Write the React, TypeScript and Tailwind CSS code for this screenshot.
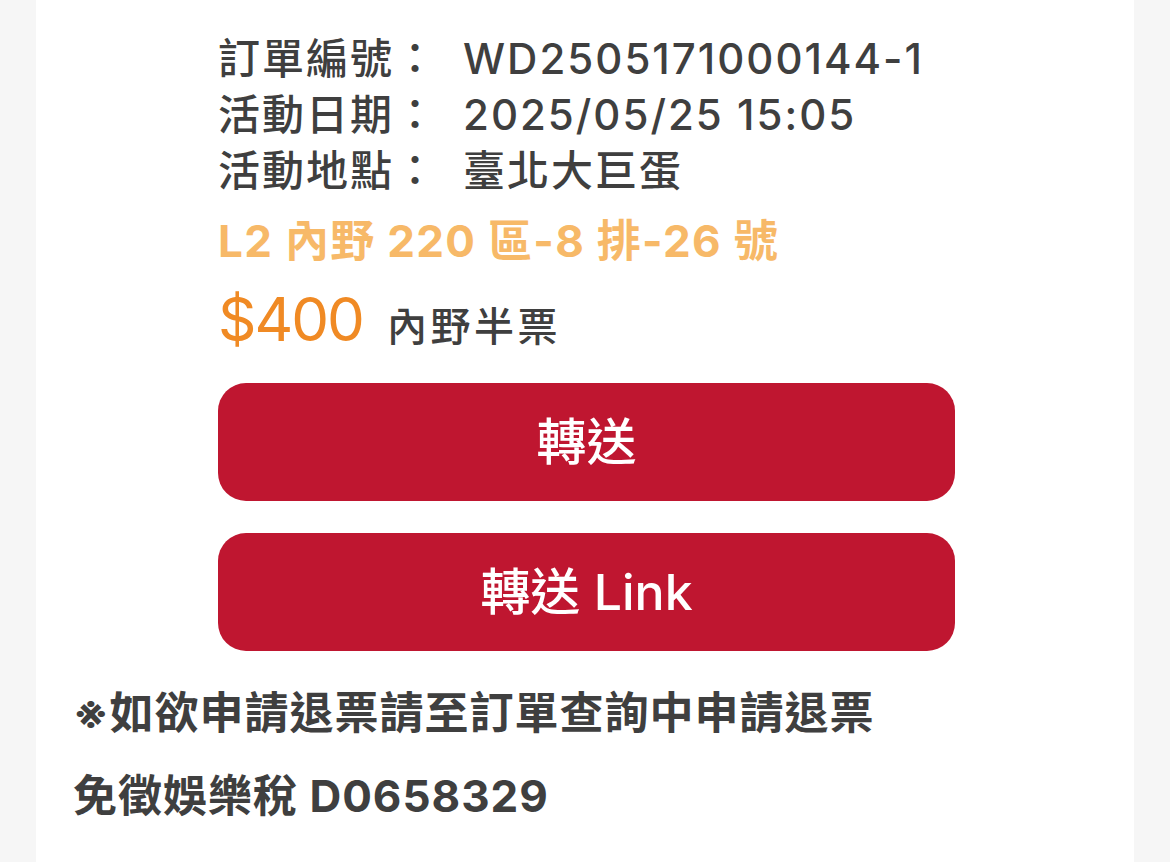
const font = "font-['Inter','Noto_Sans_CJK_TC',sans-serif]";

function InfoRow({ label, value }: { label: string; value: string }) {
  return (
    <div className="flex items-center h-[56px]">
      <span className="w-[245px] shrink-0 tracking-[2px]">{label}</span>
      <span className="tracking-[2px]">{value}</span>
    </div>
  );
}

export default function App() {
  return (
    <div className={`w-[1170px] h-[862px] overflow-hidden bg-[#f6f6f6] ${font}`}>
      <div className="mx-[36px] h-full bg-white">
        <div className="ml-[182px] w-[737px] pt-[31px]">
          <div className="text-[42px] font-medium text-[#3f3f3f] leading-none">
            <InfoRow label="訂單編號：" value="WD2505171000144-1" />
            <InfoRow label="活動日期：" value="2025/05/25 15:05" />
            <InfoRow label="活動地點：" value="臺北大巨蛋" />
          </div>
          <div className="mt-[14px] h-[56px] flex items-center text-[44px] font-bold tracking-[1.3px] text-[#f7b968]">
            L2 內野 220 區-8 排-26 號
          </div>
          <div className="mt-[20px] h-[60px] flex items-end gap-[24px]">
            <span className="text-[60px] leading-none tracking-[-2px] text-[#f08a24]">$400</span>
            <span className="text-[40px] leading-none font-medium tracking-[3.5px] text-[#3f3f3f] pb-[2px]">內野半票</span>
          </div>
          <div className="mt-[34px] flex flex-col gap-[32px]">
            <button className="h-[118px] w-full rounded-[28px] bg-[#bf1630] text-white text-[50px] font-medium">
              轉送
            </button>
            <button className="h-[118px] w-full rounded-[28px] bg-[#bf1630] text-white text-[50px] font-medium">
              轉送 Link
            </button>
          </div>
        </div>
        <div className="px-[37px] pt-[32px] text-[44px] font-bold tracking-[1px] text-[#3f3f3f]">
          <p className="h-[60px] flex items-center">※如欲申請退票請至訂單查詢中申請退票</p>
          <p className="mt-[23px] h-[60px] flex items-center">免徵娛樂稅 D0658329</p>
        </div>
      </div>
    </div>
  );
}
